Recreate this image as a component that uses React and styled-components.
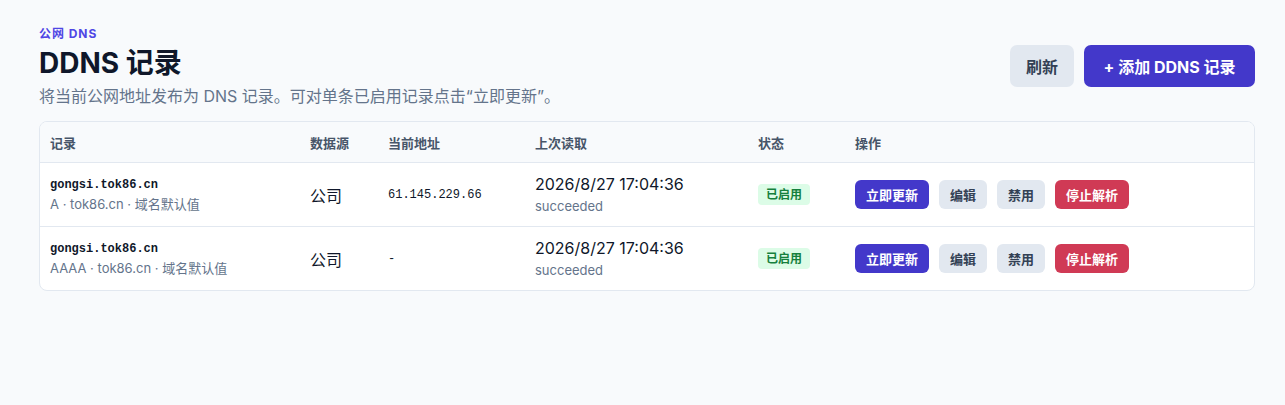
import styled, { createGlobalStyle } from 'styled-components';

const GlobalStyle = createGlobalStyle`
  body {
    margin: 0;
    background: #f8fafc;
    font-family: Inter, "Noto Sans CJK SC", sans-serif;
    color: #0f172a;
  }
`;

const Page = styled.main`
  width: 1216px;
  padding: 26px 0 0 39px;
`;

const Header = styled.header`
  display: flex;
  justify-content: space-between;
  align-items: flex-start;
  margin-bottom: 14px;
`;

const Eyebrow = styled.div`
  font-size: 12px;
  font-weight: 700;
  color: #4f46e5;
  letter-spacing: 0.08em;
  line-height: 16px;
`;

const Title = styled.h1`
  margin: 2px 0 0;
  font-size: 28px;
  font-weight: 700;
  line-height: 38px;
  color: #0f172a;
`;

const Subtitle = styled.p`
  margin: 3px 0 0;
  font-size: 16px;
  line-height: 22px;
  color: #64748b;
`;

const HeaderActions = styled.div`
  display: flex;
  gap: 10px;
  margin-top: 19px;
`;

const Button = styled.button`
  border: none;
  font-family: inherit;
  font-weight: 700;
  cursor: pointer;
  background: ${({ $variant }) =>
    $variant === 'primary' ? '#4338ca' : $variant === 'danger' ? '#d03a55' : '#e2e8f0'};
  color: ${({ $variant }) => ($variant === 'primary' || $variant === 'danger' ? '#fff' : '#334155')};
`;

const BigButton = styled(Button)`
  height: 42px;
  padding: 0 ${({ $variant }) => ($variant === 'primary' ? '19.5px' : '16px')};
  border-radius: 7px;
  font-size: 16px;
`;

const SmallButton = styled(Button)`
  height: 29px;
  padding: 0 11px;
  border-radius: 6px;
  font-size: 13px;
`;

const Card = styled.section`
  background: #fff;
  border: 1px solid #e2e8f0;
  border-radius: 8px;
  overflow: hidden;
`;

const grid = `
  display: grid;
  grid-template-columns: 260px 78px 147px 223px 97px 1fr;
  align-items: center;
  padding: 0 10px;
`;

const HeadRow = styled.div`
  ${grid}
  height: 40px;
  background: #f8fafc;
  border-bottom: 1px solid #e2e8f0;
  font-size: 13px;
  font-weight: 700;
  color: #475569;
`;

const Row = styled.div`
  ${grid}
  height: 63px;
  border-bottom: ${({ $last }) => ($last ? 'none' : '1px solid #e2e8f0')};
`;

const Stack = styled.div`
  display: flex;
  flex-direction: column;
  gap: ${({ $gap }) => $gap || 0}px;
`;

const Host = styled.span`
  font-family: "Liberation Mono", monospace;
  font-size: 12px;
  font-weight: 700;
  line-height: 19px;
  color: #0f172a;
`;

const Meta = styled.span`
  font-size: 13px;
  line-height: 19px;
  color: #64748b;
`;

const Source = styled.span`
  font-size: 16px;
`;

const Address = styled.span`
  font-family: "Liberation Mono", monospace;
  font-size: 12px;
`;

const Time = styled.span`
  font-size: 16px;
  line-height: 22px;
`;

const Badge = styled.span`
  justify-self: start;
  padding: 3px 8px;
  border-radius: 4px;
  background: #dcfce7;
  color: #15803d;
  font-size: 12px;
  font-weight: 700;
  line-height: 15px;
`;

const Actions = styled.div`
  display: flex;
  gap: 10px;
`;

const records = [
  { host: 'gongsi.tok86.cn', type: 'A', address: '61.145.229.66' },
  { host: 'gongsi.tok86.cn', type: 'AAAA', address: '-' },
];

export default function App() {
  return (
    <>
      <GlobalStyle />
      <Page>
        <Header>
          <div>
            <Eyebrow>公网 DNS</Eyebrow>
            <Title>DDNS 记录</Title>
            <Subtitle>将当前公网地址发布为 DNS 记录。可对单条已启用记录点击“立即更新”。</Subtitle>
          </div>
          <HeaderActions>
            <BigButton>刷新</BigButton>
            <BigButton $variant="primary">+ 添加 DDNS 记录</BigButton>
          </HeaderActions>
        </Header>
        <Card>
          <HeadRow>
            <span>记录</span>
            <span>数据源</span>
            <span>当前地址</span>
            <span>上次读取</span>
            <span>状态</span>
            <span>操作</span>
          </HeadRow>
          {records.map((r, i) => (
            <Row key={r.type} $last={i === records.length - 1}>
              <Stack>
                <Host>{r.host}</Host>
                <Meta>{r.type} · tok86.cn · 域名默认值</Meta>
              </Stack>
              <Source>公司</Source>
              <Address>{r.address}</Address>
              <Stack $gap={2}>
                <Time>2026/8/27 17:04:36</Time>
                <Meta>succeeded</Meta>
              </Stack>
              <Badge>已启用</Badge>
              <Actions>
                <SmallButton $variant="primary">立即更新</SmallButton>
                <SmallButton>编辑</SmallButton>
                <SmallButton>禁用</SmallButton>
                <SmallButton $variant="danger">停止解析</SmallButton>
              </Actions>
            </Row>
          ))}
        </Card>
      </Page>
    </>
  );
}
